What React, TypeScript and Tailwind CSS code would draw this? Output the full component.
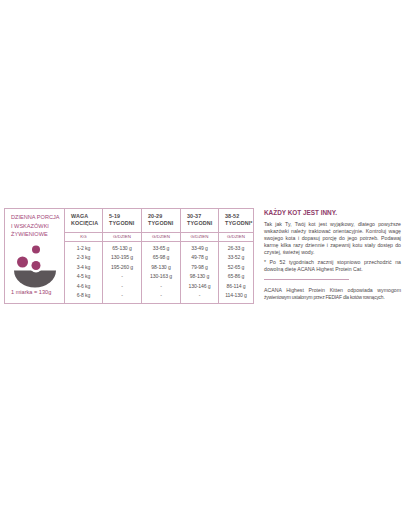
import React from "react";

const cols = [
  { w: "w-[38px]", h1: "WAGA", h2: "KOCIĘCIA", sub: "KG", rows: ["1-2 kg", "2-3 kg", "3-4 kg", "4-5 kg", "4-6 kg", "6-8 kg"] },
  { w: "w-[39px]", h1: "5-19", h2: "TYGODNI", sub: "G/DZIEŃ", rows: ["65-130 g", "130-195 g", "195-260 g", "-", "-", "-"] },
  { w: "w-[39px]", h1: "20-29", h2: "TYGODNI", sub: "G/DZIEŃ", rows: ["33-65 g", "65-98 g", "98-130 g", "130-163 g", "-", "-"] },
  { w: "w-[38px]", h1: "30-37", h2: "TYGODNI", sub: "G/DZIEŃ", rows: ["33-49 g", "49-78 g", "79-98 g", "98-130 g", "130-146 g", "-"] },
  { w: "flex-1", h1: "38-52", h2: "TYGODNI*", sub: "G/DZIEŃ", rows: ["26-33 g", "33-52 g", "52-65 g", "65-86 g", "86-114 g", "114-130 g"] },
];

export default function App() {
  return (
    <div
      className="w-[405px] h-[512px] bg-white pt-[208px] pl-[4px] flex items-start gap-[10px]"
      style={{ fontFamily: '"Liberation Sans", Arial, sans-serif' }}
    >
      {/* Table */}
      <div className="w-[250px] h-[96px] border border-[#cfaabf] flex">
        <div className="w-[59px] flex flex-col pt-[4px] pl-[6px]">
          <div className="text-[5.6px] leading-[8.5px] text-[#a4477a]">
            <div>DZIENNA PORCJA</div>
            <div>I WSKAZÓWKI</div>
            <div>ŻYWIENIOWE</div>
          </div>
          <svg width="53" height="48" viewBox="0 0 53 48" className="-ml-[6px] mt-[1px]">
            <circle cx="31" cy="9.5" r="4" fill="#9c3d6d" />
            <circle cx="17.5" cy="22" r="5.5" fill="#9c3d6d" />
            <path d="M9 30.5 A21 17 0 0 0 51 30.5 Z" fill="#5c5659" />
            <circle cx="31" cy="26" r="6.4" fill="#ffffff" />
            <circle cx="31" cy="25.5" r="4.5" fill="#9c3d6d" />
          </svg>
          <div className="text-[5.6px] leading-[8px] text-[#9c3d6d]">1 miarka = 130g</div>
        </div>
        {cols.map((c, i) => (
          <div key={i} className={`${c.w} border-l border-[#cfaabf] flex flex-col`}>
            <div className="h-[23px] pt-[4px] pl-[6px] text-[5.4px] leading-[7px] text-[#4e4a4c] font-semibold tracking-[0.1px]">
              <div>{c.h1}</div>
              <div>{c.h2}</div>
            </div>
            <div className="h-[10px] border-t border-b border-[#cfaabf] flex items-center justify-center text-[4.4px] text-[#94476f]">
              {c.sub}
            </div>
            <div className="flex-1 flex flex-col pt-[2px]">
              {c.rows.map((r, j) => (
                <div key={j} className="h-[9.5px] flex items-center justify-center text-[5.1px] text-[#555052] tracking-[-0.1px] whitespace-nowrap">
                  {r}
                </div>
              ))}
            </div>
          </div>
        ))}
      </div>

      {/* Right text */}
      <div className="w-[137px] pt-[1px] text-[#4f4a4c]">
        <div className="text-[6.4px] leading-[8px] font-bold text-[#8e3a68]">KAŻDY KOT JEST INNY.</div>
        <p className="mt-[4px] text-[5.2px] leading-[7px] text-justify">
          Tak jak Ty, Twój kot jest wyjątkowy, dlatego powyższe wskazówki należy traktować orientacyjnie. Kontroluj wagę swojego kota i dopasuj porcję do jego potrzeb. Podawaj karmę kilka razy dziennie i zapewnij kotu stały dostęp do czystej, świeżej wody.
        </p>
        <p className="mt-[3px] text-[5.2px] leading-[7px] text-justify">
          * Po 52 tygodniach zacznij stopniowo przechodzić na dowolną dietę ACANA Highest Protein Cat.
        </p>
        <div className="mt-[6px] w-[85px] h-px bg-[#c99fb6]" />
        <div className="mt-[7px] leading-[7px]">
          <div className="text-[5.2px] text-justify [text-align-last:justify]">
            ACANA Highest Protein Kitten odpowiada wymogom
          </div>
          <div className="text-[4.9px] tracking-[-0.2px] whitespace-nowrap">
            żywieniowym ustalonym przez FEDIAF dla kotów rosnących.
          </div>
        </div>
      </div>
    </div>
  );
}
